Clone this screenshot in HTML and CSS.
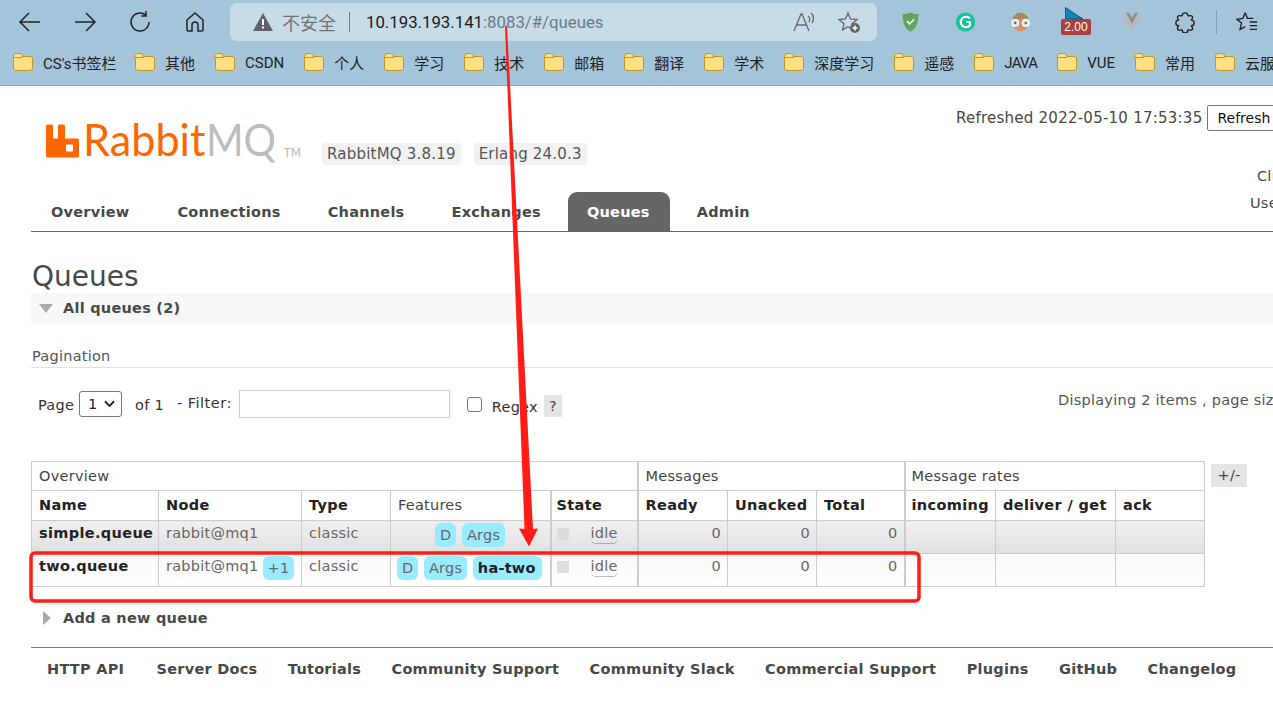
FILE: index.html
```html
<!DOCTYPE html>
<html lang="zh">
<head>
<meta charset="utf-8">
<title>RabbitMQ Management</title>
<link rel="stylesheet" href="styles.css">
</head>
<body>
<div class="toolbar">
  <svg class="nav-ico" viewBox="0 0 24 24"><path d="M22 12H2M11 3l-9 9 9 9"/></svg>
  <svg class="nav-ico" viewBox="0 0 24 24"><path d="M2 12h20M13 3l9 9-9 9"/></svg>
  <svg class="nav-ico" viewBox="0 0 24 24"><path d="M21 12a9 9 0 1 1-3.500-7.100M18 1v5h-5" /></svg>
  <svg class="nav-ico" viewBox="0 0 24 24"><path d="M4 10l8-7 8 7v10a1 1 0 0 1-1 1h-4v-6a3 3 0 0 0-6 0v6H5a1 1 0 0 1-1-1z"/></svg>
  <div class="omnibox">
    <svg class="warn" viewBox="0 0 20 18"><path fill="#5f6368" d="M10 0l10 18H0z"/><path fill="#fff" d="M9 6h2v6H9zM9 13.500h2v2H9z"/></svg>
    <span class="insecure">不安全</span>
    <span class="sep"></span>
    <span class="host">10.193.193.141</span><span class="rest">:8083/#/queues</span>
    <span class="omni-end">
      <svg class="omni-ico" viewBox="0 0 24 24"><path d="M2 21L9 4h1l7 17M5 15h10M16 6c2 1 2 4 1 6M19 3c3 2 3 7 1 10"/></svg>
      <svg class="omni-ico" viewBox="0 0 24 24"><path d="M11 3l2.500 6 6.500.500-5 4.200 1.500 6.300-5.500-3.300L5.500 20 7 13.700 2 9.500 8.500 9z"/><circle class="dot" cx="18" cy="18" r="5"/><path class="plus" d="M18 15.500v5M15.500 18h5"/></svg>
    </span>
  </div>
  <div class="exts">
    <svg class="ext" viewBox="0 0 24 24"><path fill="#5fa55a" d="M3 3c4 0 6-1 9-2 3 1 5 2 9 2 0 9-2 16-9 20C5 19 3 12 3 3z"/><path fill="none" stroke="#fff" stroke-width="2" d="M8 11l3 3 5-5"/></svg>
    <svg class="ext" viewBox="0 0 24 24"><circle cx="12" cy="12" r="11" fill="#15c39a"/><path fill="none" stroke="#fff" stroke-width="2.500" d="M17 8a6 6 0 1 0 0 8v-4h-4"/></svg>
    <svg class="ext" viewBox="0 0 24 24"><circle cx="12" cy="13" r="9.500" fill="#d98f6a"/><path fill="#a58a5f" d="M2.500 11a9.500 9.500 0 0 1 19 0c-3-3-6-4-10-3-3 .5-6 2-9 3z"/><circle cx="6" cy="13" r="3.800" fill="#cfe3e6" stroke="#fff" stroke-width="1.500"/><circle cx="18" cy="13" r="3.800" fill="#cfe3e6" stroke="#fff" stroke-width="1.500"/><circle cx="6" cy="13" r="1.200" fill="#556"/><circle cx="18" cy="13" r="1.200" fill="#556"/></svg>
    <div class="ext-badge">
      <svg class="flag" viewBox="0 0 18 12"><path fill="#0b85bd" stroke="#123" stroke-width=".6" d="M.5.500L18 12H.5z"/></svg>
      <span class="badge-num">2.00</span>
    </div>
    <svg class="ext wide" viewBox="0 0 24 24"><path fill="#b9b9b9" d="M0 1h7l5 8 5-8h7L12 23z"/><path fill="#8d8d8d" d="M5 1h3l4 6 4-6h3l-7 13z"/></svg>
    <svg class="nav-ico small" viewBox="0 0 24 24"><path d="M9 5a3 3 0 0 1 6 0c0 1 4-1 5 1s-1 3-1 4a3 3 0 0 1 0 6c0 1 2 2 1 4s-5 0-5 1a3 3 0 0 1-6 0c0-1-4 1-5-1s1-3 1-4a3 3 0 0 1 0-6c0-1-2-2-1-4s5 0 5-1z"/></svg>
    <span class="tool-sep"></span>
    <svg class="nav-ico small" viewBox="0 0 24 24"><path d="M10 2l2.500 6H19M10 2L7.500 8 1 9l5 4-1.500 7 5.500-3M15 12h8M15 16h8M15 20h8"/></svg>
  </div>
</div>
<div class="bookmarks">
  <span class="bm first"><i class="folder"></i>CS's书签栏</span>
  <span class="bm"><i class="folder"></i>其他</span>
  <span class="bm"><i class="folder"></i>CSDN</span>
  <span class="bm"><i class="folder"></i>个人</span>
  <span class="bm"><i class="folder"></i>学习</span>
  <span class="bm"><i class="folder"></i>技术</span>
  <span class="bm"><i class="folder"></i>邮箱</span>
  <span class="bm"><i class="folder"></i>翻译</span>
  <span class="bm"><i class="folder"></i>学术</span>
  <span class="bm"><i class="folder"></i>深度学习</span>
  <span class="bm"><i class="folder"></i>遥感</span>
  <span class="bm narrow"><i class="folder"></i>JAVA</span>
  <span class="bm"><i class="folder"></i>VUE</span>
  <span class="bm"><i class="folder"></i>常用</span>
  <span class="bm"><i class="folder"></i>云服务器</span>
</div>
<div class="page">
  <header class="head">
    <div class="head-left">
      <div class="brand">
        <svg class="logo" viewBox="0 0 33 33"><path fill="#f60" d="M0 1.500C0 .7.700 0 1.500 0h4C6.300 0 7 .7 7 1.500V14h5V1.500C12 .7 12.700 0 13.500 0h4c.8 0 1.500.7 1.500 1.500V14h12.500c.8 0 1.500.7 1.500 1.500v16c0 .8-.7 1.500-1.500 1.500h-30C.7 33 0 32.300 0 31.500z"/><rect fill="#fff" x="20" y="20" width="7" height="7" rx="1"/></svg>
        <span class="wm-r">Rabbit</span><span class="wm-g">MQ</span><span class="tm">TM</span>
        <span class="ver first-ver">RabbitMQ 3.8.19</span>
        <span class="ver">Erlang 24.0.3</span>
      </div>
    </div>
    <div class="head-right">
      <div class="refresh-row">Refreshed 2022-05-10 17:53:35 <button class="refresh">Refresh every 5 seconds</button></div>
      <div class="who">Cluster rabbit@mq1</div>
      <div class="who user">User guest</div>
    </div>
  </header>
  <nav class="tabs">
    <a class="tab first">Overview</a><a class="tab">Connections</a><a class="tab">Channels</a><a class="tab">Exchanges</a><a class="tab on">Queues</a><a class="tab">Admin</a>
  </nav>
  <h1 class="title">Queues</h1>
  <div class="section-bar"><i class="tri-down"></i>All queues (2)</div>
  <h3 class="pag-title">Pagination</h3>
  <div class="pag-row">
    <div class="pag-left">
      <span class="lbl">Page</span>
      <span class="fake-select">1<svg viewBox="0 0 12 8"><path d="M1 1l5 5 5-5"/></svg></span>
      <span class="lbl of">of 1</span>
      <span class="lbl filter">- Filter:</span>
      <span class="fake-input"></span>
      <span class="fake-check"></span>
      <span class="lbl regex">Regex</span>
      <span class="help">?</span>
    </div>
    <div class="pag-right">Displaying 2 items , page size up to: 100</div>
  </div>
  <div class="table-wrap">
    <table class="queues">
      <colgroup><col class="c1"><col class="c2"><col class="c3"><col class="c4"><col class="c5"><col class="c6"><col class="c7"><col class="c8"><col class="c9"><col class="c10"><col class="c11"></colgroup>
      <thead>
        <tr class="group"><th colspan="5">Overview</th><th colspan="3" class="thick">Messages</th><th colspan="3" class="thick rates">Message rates</th></tr>
        <tr class="cols"><th>Name</th><th>Node</th><th>Type</th><th class="plain">Features</th><th class="thick state">State</th><th class="thick">Ready</th><th>Unacked</th><th>Total</th><th class="thick rates">incoming</th><th>deliver / get</th><th>ack</th></tr>
      </thead>
      <tbody>
        <tr class="odd">
          <td class="name">simple.queue</td><td>rabbit@mq1</td><td>classic</td>
          <td class="feat center"><span class="pill">D</span><span class="pill">Args</span></td>
          <td class="thick state"><i class="sq"></i><span class="idle">idle</span></td>
          <td class="thick num">0</td><td class="num">0</td><td class="num">0</td>
          <td class="thick"></td><td></td><td></td>
        </tr>
        <tr class="even">
          <td class="name">two.queue</td><td>rabbit@mq1<span class="pill node-pill">+1</span></td><td>classic</td>
          <td class="feat"><span class="pill">D</span><span class="pill">Args</span><span class="pill strong">ha-two</span></td>
          <td class="thick state"><i class="sq"></i><span class="idle">idle</span></td>
          <td class="thick num">0</td><td class="num">0</td><td class="num">0</td>
          <td class="thick"></td><td></td><td></td>
        </tr>
      </tbody>
    </table>
    <span class="plusminus">+/-</span>
  </div>
  <div class="add"><i class="tri-right"></i>Add a new queue</div>
  <footer class="foot">
    <a class="api">HTTP API</a><a>Server Docs</a><a>Tutorials</a><a>Community Support</a><a>Community Slack</a><a>Commercial Support</a><a>Plugins</a><a>GitHub</a><a>Changelog</a>
  </footer>
</div>
<svg class="markup" viewBox="0 0 1273 709" width="1273" height="709">
  <rect x="31" y="553" width="888" height="48" rx="4" fill="none" stroke="#ff1d15" stroke-width="3.500"/>
  <path fill="#ff1d15" d="M505 26h2l26 503 5-.5-9 18-10-18 5.500.5z"/>
</svg>
</body>
</html>
```
FILE: styles.css
```css
html, body { margin: 0; padding: 0; height: 709px; overflow: hidden; background: #fff; }
body { position: relative; width: 1273px; font-family: "DejaVu Sans", Verdana, sans-serif; color: #484848; }
.toolbar { height: 46px; background: #a3c4d9; display: flex; align-items: center; padding: 0 0 2px 18px; box-sizing: border-box; }
.nav-ico { width: 24px; height: 24px; margin-right: 31px; fill: none; stroke: #222; stroke-width: 1.5; flex: none; }
.nav-ico.small { width: 22px; height: 22px; margin-right: 0; }
.omnibox { flex: none; margin-left: -8px; width: 647px; height: 38px; box-sizing: border-box; background: #c7dce8; border-radius: 7px; display: flex; align-items: center; padding-left: 23px; font: 16.800px "Roboto", "Noto Sans CJK SC", sans-serif; }
.warn { width: 20px; height: 18px; margin-right: 9px; }
.insecure { color: #727272; font-family: "Noto Sans CJK SC", sans-serif; font-size: 18px; }
.sep { width: 1px; height: 20px; background: #777; margin: 0 16px 0 13px; }
.host { color: #1a1a1a; }
.rest { color: #6a7a84; }
.omni-end { margin-left: auto; display: flex; gap: 21px; padding-right: 16px; }
.omni-ico { width: 24px; height: 24px; fill: none; stroke: #666; stroke-width: 1.300; }
.omni-ico .dot { fill: #666; stroke: none; }
.omni-ico .plus { stroke: #fff; stroke-width: 1.500; }
.exts { flex: none; margin-left: 23px; display: flex; align-items: center; }
.ext { width: 21px; height: 24px; flex: none; margin-right: 34px; }
.ext.wide { margin-right: 32px; width: 20px; }
.ext-badge { width: 30px; height: 34px; margin: 3px 31px 0 -4px; flex: none; }
.flag { width: 18px; height: 12px; display: block; margin-left: 4px; }
.badge-num { display: block; background: #a9403f; color: #fff; font: 12px "Liberation Sans", sans-serif; line-height: 16px; text-align: center; width: 30px; border-radius: 2px; }
.tool-sep { width: 1px; height: 24px; background: #83a0b3; margin: 0 19px 0 20px; flex: none; }
.bookmarks { height: 40px; background: #a3c4d9; display: flex; align-items: center; padding: 0 0 6px 13px; box-sizing: border-box; border-bottom: 1px solid #8ba6b8; overflow: hidden; white-space: nowrap; font: 15px "Roboto", "Noto Sans CJK SC", sans-serif; color: #222; }
.bm { display: flex; align-items: center; flex: none; margin-right: 20px; }
.bm.first { margin-right: 18.500px; }
.bm.narrow { letter-spacing: -.8px; }
.folder { width: 20px; height: 15px; margin-right: 10px; background: #ffdf84; border: 1.500px solid #c4961e; border-radius: 3px; position: relative; flex: none; box-sizing: border-box; margin-top: 2px; }
.folder::before { content: ""; position: absolute; left: -1.500px; top: -4px; width: 10px; height: 5px; background: #ffdf84; border: 1.500px solid #c4961e; border-radius: 3px 3px 0 0; box-sizing: border-box; }
.page { width: 1500px; font-size: 14.500px; letter-spacing: .25px; padding-left: 31px; box-sizing: border-box; }
.head { height: 106px; display: flex; }
.head-left { width: 800px; }
.brand { display: flex; align-items: flex-end; margin-left: 15px; padding-top: 31px; height: 44px; line-height: 44px; }
.logo { width: 33px; height: 34px; margin-bottom: 3px; margin-right: 4px; flex: none; align-self: flex-end; }
.wm-r { color: #f60; font: 400 45px/44px "Lato", sans-serif; letter-spacing: 0; display: inline-block; transform: scaleX(.96); transform-origin: left; margin-right: -5px; }
.wm-g { color: #bdbdbd; font: 400 45px/44px "Lato", sans-serif; letter-spacing: 0; display: inline-block; transform: scaleX(.9); transform-origin: left; margin-right: -8px; }
.tm { color: #bbb; font: 12px/12px "DejaVu Sans", sans-serif; margin: 0 0 2px 8px; letter-spacing: 0; }
.ver { background: #f1f1f1; border-radius: 4px; color: #555; font: 15px/20px "DejaVu Sans", sans-serif; letter-spacing: .2px; padding: 1px 5px; margin-bottom: -4px; align-self: flex-end; white-space: nowrap; }
.first-ver { margin-left: 21px; }
.ver + .ver { margin-left: 13px; }
.head-right { padding: 19px 0 0 125px; white-space: nowrap; font-size: 15px; letter-spacing: .24px; }
.refresh-row { height: 26px; margin-bottom: 32px; }
.refresh { font: 14px "DejaVu Sans", sans-serif; height: 26px; padding: 0 9px; background: #fff; border: 1px solid #767676; border-radius: 2px; color: #111; }
.who { margin-left: 301px; height: 27px; line-height: 27px; font-size: 14.500px; }
.who.user { margin-left: 294px; }
.tabs { height: 39px; border-bottom: 1px solid #666; width: 1242px; display: flex; align-items: flex-end; }
.tab { height: 39px; line-height: 40px; padding: 0 20px; margin-right: 7px; font-weight: bold; }
.tab.first { margin-right: 8px; }
.tab.on { background: #666; color: #fff; border-radius: 9px 9px 0 0; padding: 0 20px 0 19px; margin-right: 7px; }
.title { margin: 28px 0 0 1px; font-size: 28px; line-height: 33px; font-weight: normal; color: #484848; letter-spacing: 0; }
.section-bar { height: 31px; line-height: 31px; width: 1242px; background: #f8f8f8; font-weight: bold; color: #484848; display: flex; align-items: center; }
.tri-down { width: 0; height: 0; border: 7px solid transparent; border-top: 9px solid #aaa; border-bottom: 0; margin: 0 10px 0 8px; }
.tri-right { width: 0; height: 0; border: 7px solid transparent; border-left: 8px solid #aaa; border-right: 0; margin: 0 12px 0 12px; }
.pag-title { margin: 22px 0 0; font-weight: normal; font-size: 14.500px; line-height: 20px; height: 20px; padding: 0 0 1px 1px; border-bottom: 1px solid #e2e2e2; width: 1241px; color: #555; }
.pag-row { height: 93px; width: 1300px; display: flex; }
.pag-left { display: flex; align-items: flex-start; padding: 23px 0 0 7px; width: 1027px; flex: none; box-sizing: border-box; }
.lbl { color: #333; line-height: 28px; }
.fake-select { width: 43px; height: 26px; border: 1px solid #767676; border-radius: 3px; margin: 0 13px 0 5px; box-sizing: border-box; display: flex; align-items: center; justify-content: space-between; padding: 0 6px 0 8px; color: #222; background: #fff; }
.fake-select svg { width: 11px; height: 8px; fill: none; stroke: #222; stroke-width: 2; }
.filter { margin-left: 13px; line-height: 24px; letter-spacing: .5px; }
.fake-input { width: 211px; height: 28px; box-sizing: border-box; border: 1px solid #ccc; margin: -1px 17px 0 7px; }
.fake-check { width: 15px; height: 15px; box-sizing: border-box; border: 1px solid #767676; border-radius: 3px; margin: 6px 10px 0 0; }
.regex { margin-top: 2px; }
.help { width: 18px; height: 22px; line-height: 22px; text-align: center; background: #e4e4e4; margin: 4px 0 0 6px; }
.pag-right { padding-top: 24px; white-space: nowrap; color: #555; font-size: 14.500px; }
.table-wrap { display: flex; align-items: flex-start; }
.queues { border-collapse: collapse; table-layout: fixed; width: 1173px; flex: none; }
.c1 { width: 127px; } .c2 { width: 143px; } .c3 { width: 89px; } .c4 { width: 160px; } .c5 { width: 87px; }
.c6 { width: 90px; } .c7 { width: 89px; } .c8 { width: 88px; } .c9 { width: 91px; } .c10 { width: 120px; } .c11 { width: 89px; }
.queues th, .queues td { border: 1px solid #ccc; padding: 0 7px; text-align: left; white-space: nowrap; vertical-align: top; }
.group th { height: 28px; line-height: 28px; font-weight: normal; color: #444; }
.cols th { height: 29px; line-height: 29px; font-weight: bold; color: #222; letter-spacing: .35px; }
.queues .cols th.plain { font-weight: normal; color: #444; letter-spacing: .25px; }
.queues .thick { border-left-width: 2px; }
.queues .state { padding-left: 5px; }
.queues .rates { padding-left: 6px; }
.queues tbody td { box-sizing: border-box; height: 33px; line-height: 25px; color: #666; }
.odd td { background: linear-gradient(#f0f0f0, #e0e0e0); }
.even td { background: linear-gradient(#f8f8f8, #fff); }
.queues td.name { font-weight: bold; color: #222; letter-spacing: .35px; }
.queues td.num { text-align: right; padding-right: 6px; }
.queues td.feat { padding: 2px 0 0 6px; line-height: 24px; }
.queues td.feat.center { padding-left: 44px; }
.pill { display: inline-block; background: #99ebff; border-radius: 6px; padding: 0 5px; margin-right: 5.500px; line-height: 24px; height: 24px; color: #666; vertical-align: top; }
.pill.strong { font-weight: bold; color: #222; padding: 0 6px 0 5px; }
.node-pill { margin: 2px 0 0 4px; padding: 0 5px; }
.sq { display: inline-block; width: 12px; height: 12px; background: #ddd; vertical-align: top; margin: 7px 22px 0 0; }
.idle { display: inline-block; line-height: 19px; margin-top: 3px; border-bottom: 1px dotted #777; border-radius: 0 0 5px 5px; vertical-align: top; }
.plusminus { background: #e4e4e4; color: #444; width: 36px; height: 23px; line-height: 23px; text-align: center; margin: 3px 0 0 6px; flex: none; }
.add { margin-top: 19px; height: 24px; line-height: 24px; display: flex; align-items: center; font-weight: bold; color: #484848; }
.foot { margin-top: 17px; width: 1242px; border-top: 1px solid #777; padding: 11px 0 0 16px; box-sizing: border-box; display: flex; gap: 30.400px; font-weight: bold; line-height: 20px; color: #484848; white-space: nowrap; }
.api { margin-right: 2px; }
.markup { position: absolute; left: 0; top: 0; pointer-events: none; }
```
